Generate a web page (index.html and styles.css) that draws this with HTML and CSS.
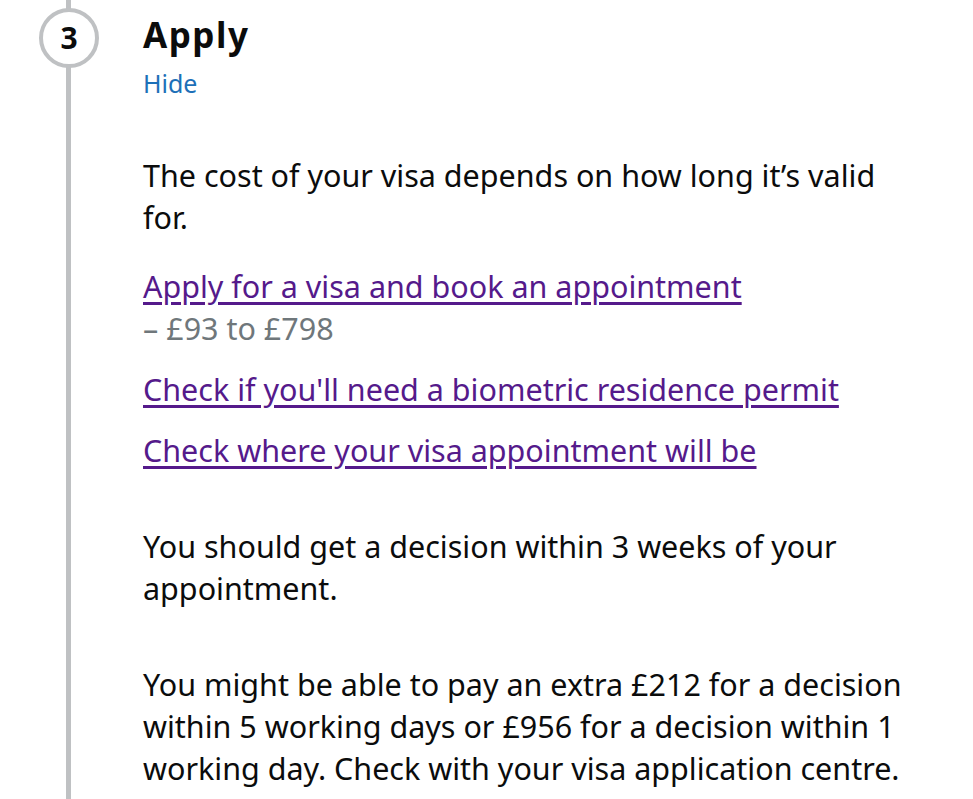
FILE: index.html
```html
<!DOCTYPE html>
<html lang="en">
<head>
<meta charset="utf-8">
<title>Apply</title>
<link rel="stylesheet" href="styles.css">
</head>
<body>
<div class="step-nav">
  <div class="step">
    <div class="step-header">
      <span class="step-number">3</span>
      <h2 class="step-title">Apply</h2>
      <a class="step-toggle" href="#">Hide</a>
    </div>
    <div class="step-panel">
      <p class="para para-first">The cost of your visa depends on how long it’s valid for.</p>
      <ul class="links">
        <li class="links-item"><a class="link" href="#">Apply for a visa and book an appointment </a><span class="context">– £93 to £798</span></li>
        <li class="links-item"><a class="link" href="#">Check if you'll need a biometric residence permit</a></li>
        <li class="links-item"><a class="link" href="#">Check where your visa appointment will be</a></li>
      </ul>
      <p class="para">You should get a decision within 3 weeks of your appointment.</p>
      <p class="para">You might be able to pay an extra £212 for a decision within 5 working days or £956 for a decision within 1 working day. Check with your visa application centre.</p>
    </div>
  </div>
</div>
</body>
</html>
```

FILE: styles.css
```css
html, body {
  margin: 0;
  padding: 0;
  background: #ffffff;
}

body {
  font-family: "Noto Sans", "Liberation Sans", sans-serif;
  color: #0b0c0c;
  overflow: hidden;
  height: 799px;
}

.step-nav {
  position: relative;
  min-height: 799px;
}

.step {
  position: relative;
  padding-left: 143px;
  padding-right: 60px;
  min-height: 799px;
}

.step::before {
  content: "";
  position: absolute;
  left: 66px;
  top: 0;
  bottom: 0;
  width: 5px;
  background: #bfc1c3;
}

.step-header {
  position: relative;
  padding-top: 13px;
}

.step-number {
  position: absolute;
  left: -104px;
  top: 8px;
  width: 52px;
  height: 52px;
  border: 4px solid #bfc1c3;
  border-radius: 50%;
  background: #ffffff;
  box-sizing: content-box;
  display: flex;
  align-items: center;
  justify-content: center;
  font-weight: 700;
  font-size: 30px;
  line-height: 1;
  color: #0b0c0c;
}

.step-title {
  margin: 0;
  font-size: 35px;
  line-height: 44px;
  font-weight: 700;
  letter-spacing: 1.5px;
}

.step-toggle {
  display: inline-block;
  margin-top: 10px;
  font-size: 25px;
  line-height: 32px;
  color: #1d70b8;
  text-decoration: none;
}

.step-panel {
  padding-top: 55px;
  max-width: 770px;
}

.para {
  margin: 0 0 54px 0;
  font-size: 30.5px;
  line-height: 42px;
}

.para-first {
  margin-bottom: 27px;
}

.links {
  list-style: none;
  margin: 0 0 54px 0;
  padding: 0;
}

.links-item {
  font-size: 30.5px;
  line-height: 42px;
  margin-bottom: 19px;
}

.links-item:last-child {
  margin-bottom: 0;
}

.link {
  color: #551a8b;
  text-decoration: underline;
  text-decoration-thickness: 3px;
  text-underline-offset: 4px;
}

.context {
  display: block;
  color: #6f777b;
}
```
